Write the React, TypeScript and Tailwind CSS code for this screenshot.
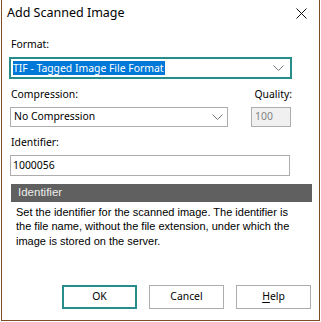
import React from "react";

const ui = { fontFamily: '"Segoe UI", "Noto Sans", sans-serif' };
const tahoma = { fontFamily: 'Tahoma, "Liberation Sans", sans-serif' };

const Chevron = () => (
  <svg width="11" height="6" viewBox="0 0 11 6" className="shrink-0">
    <polyline points="0.5,0.5 5.5,5.5 10.5,0.5" fill="none" stroke="#7a7a7a" strokeWidth="1" />
  </svg>
);

export default function App() {
  return (
    <div className="h-[322px] w-[321px] bg-white pl-px text-[10.4px] text-black" style={ui}>
      <div className="flex h-[321px] w-[319px] flex-col border-x border-b border-[#7d4f27]">
        {/* title bar */}
        <div className="flex h-[26px] items-center justify-between pl-[5px] pr-[12px]">
          <span className="text-[12.5px]">Add Scanned Image</span>
          <svg width="11" height="11" viewBox="0 0 11 11">
            <path d="M0.5 0.5 L10.5 10.5 M10.5 0.5 L0.5 10.5" stroke="#111" strokeWidth="1" />
          </svg>
        </div>

        <div className="flex flex-col pl-[8px]">
          <div className="ml-px mt-[10px] h-[16px] leading-[16px]">Format:</div>
          <div className="ml-[-1px] mt-[5px] flex h-[22px] w-[283px] items-center justify-between border-2 border-[#268c8c] pl-[2px] pr-[6px]">
            <span className="h-[14px] bg-[#0078d7] pr-px leading-[14px] text-white">TIF - Tagged Image File Format</span>
            <Chevron />
          </div>

          <div className="mt-[7px] flex h-[16px] w-[282px] items-center justify-between leading-[16px]">
            <span className="ml-px">Compression:</span>
            <span>Quality:</span>
          </div>
          <div className="mt-[5px] flex w-[281px] items-center justify-between">
            <div className="flex h-[20px] w-[218px] items-center justify-between border border-[#adadad] pl-[3px] pr-[4px]">
              <span>No Compression</span>
              <Chevron />
            </div>
            <div className="flex h-[20px] w-[40px] items-center border border-[#adadad] bg-[#f0f0f0] pl-[3px] text-[#838383]">
              100
            </div>
          </div>

          <div className="ml-px mt-[7px] h-[16px] leading-[16px]">Identifier:</div>
          <div className="mt-[5px] flex h-[21px] w-[280px] items-center border border-[#adadad] pl-[2px]">
            1000056
          </div>

          <div
            className="ml-px mt-[8px] flex h-[18px] w-[301px] items-center bg-[#606060] pl-[7px] text-[11.5px] text-[#ececec]"
            style={tahoma}
          >
            Identifier
          </div>
          <p className="ml-[6px] mt-[3px] w-[280px] text-[11px] leading-[14.3px]" style={tahoma}>
            Set the identifier for the scanned image. The identifier is the file name, without the file extension, under
            which the image is stored on the server.
          </p>
        </div>

        <div className="mt-auto mb-[11px] flex justify-end gap-[12px] pr-[8px]">
          <button className="h-[24px] w-[75px] border-2 border-[#268c8c] bg-white">OK</button>
          <button className="h-[24px] w-[75px] border border-[#adadad] bg-white">Cancel</button>
          <button className="h-[24px] w-[75px] border border-[#adadad] bg-white">
            <span className="underline underline-offset-2">H</span>elp
          </button>
        </div>
      </div>
    </div>
  );
}
